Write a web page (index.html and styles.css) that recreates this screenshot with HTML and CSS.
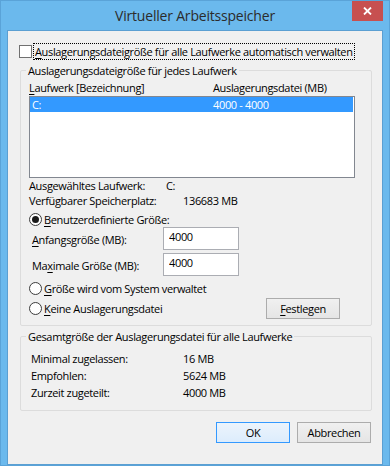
FILE: index.html
```html
<!DOCTYPE html>
<html lang="de">
<head>
    <meta charset="UTF-8">
    <meta name="viewport" content="width=device-width, initial-scale=1.0">
    <title>Virtueller Arbeitsspeicher</title>
    <link rel="stylesheet" href="styles.css">
</head>
<body>
    <div class="window">
        <div class="titlebar">
            <span class="title">Virtueller Arbeitsspeicher</span>
            <button class="close" aria-label="Schließen">
                <svg width="9" height="8" viewBox="0 0 9 8">
                    <path d="M1 0.5 L8 7.5 M8 0.5 L1 7.5" stroke="#fff" stroke-width="1.8" fill="none"/>
                </svg>
            </button>
        </div>
        <div class="client">
            <label class="check-row">
                <span class="checkbox"></span>
                <span class="focus"><u>A</u>uslagerungsdateigröße für alle Laufwerke automatisch verwalten</span>
            </label>

            <fieldset class="group group-drives">
                <legend>Auslagerungsdateigröße für jedes Laufwerk</legend>
                <div class="list-head">
                    <span class="col-drive"><u>L</u>aufwerk [Bezeichnung]</span>
                    <span>Auslagerungsdatei (MB)</span>
                </div>
                <div class="listbox">
                    <div class="list-item selected">
                        <span class="col-drive">C:</span>
                        <span>4000 - 4000</span>
                    </div>
                </div>
                <div class="info-row">
                    <span class="info-label short">Ausgewähltes Laufwerk:</span>
                    <span>C:</span>
                </div>
                <div class="info-row">
                    <span class="info-label">Verfügbarer Speicherplatz:</span>
                    <span>136683 MB</span>
                </div>
                <label class="radio-row first">
                    <span class="radio checked"></span>
                    <span><u>B</u>enutzerdefinierte Größe:</span>
                </label>
                <div class="size-row">
                    <span class="size-label"><u>A</u>nfangsgröße (MB):</span>
                    <input class="textbox" type="text" value="4000">
                </div>
                <div class="size-row second">
                    <span class="size-label">Ma<u>x</u>imale Größe (MB):</span>
                    <input class="textbox" type="text" value="4000">
                </div>
                <label class="radio-row system">
                    <span class="radio"></span>
                    <span><u>G</u>röße wird vom System verwaltet</span>
                </label>
                <div class="last-row">
                    <label class="radio-row">
                        <span class="radio"></span>
                        <span><u>K</u>eine Auslagerungsdatei</span>
                    </label>
                    <button class="button set"><u>F</u>estlegen</button>
                </div>
            </fieldset>

            <fieldset class="group group-total">
                <legend>Gesamtgröße der Auslagerungsdatei für alle Laufwerke</legend>
                <div class="total-grid">
                    <span>Minimal zugelassen:</span><span>16 MB</span>
                    <span>Empfohlen:</span><span>5624 MB</span>
                    <span>Zurzeit zugeteilt:</span><span>4000 MB</span>
                </div>
            </fieldset>

            <div class="actions">
                <button class="button default">OK</button>
                <button class="button">Abbrechen</button>
            </div>
        </div>
    </div>
</body>
</html>
```

FILE: styles.css
```css
body {
    margin: 0;
    background-color: #6bb9ed;
    font-family: "Open Sans", "Noto Sans", sans-serif;
    font-size: 11px;
    letter-spacing: -0.35px;
    color: #000;
}
u {
    text-decoration-thickness: 1px;
    text-underline-offset: 2px;
}
.window {
    width: 390px;
    height: 466px;
    box-sizing: border-box;
    border: 1px solid #5aa3d8;
    background-color: #6bb9ed;
    display: flex;
    flex-direction: column;
}
.titlebar {
    height: 29px;
    display: flex;
    justify-content: center;
    position: relative;
}
.title {
    font-size: 14px;
    letter-spacing: -0.2px;
    line-height: 29px;
    color: #2b2b2b;
}
.close {
    position: absolute;
    top: 0;
    right: 6px;
    width: 31px;
    height: 20px;
    border: none;
    padding: 0;
    background-color: #c75050;
    display: flex;
    justify-content: center;
    align-items: center;
}
.client {
    margin: 0 6px;
    height: 426px;
    border: 1px solid #5b9fd2;
    background-color: #f0f0f0;
    padding-top: 12px;
    box-sizing: content-box;
}
.check-row {
    display: flex;
    align-items: center;
    height: 16px;
    padding-left: 11px;
}
.checkbox {
    width: 13px;
    height: 13px;
    box-sizing: border-box;
    border: 1px solid #707070;
    background-color: #fff;
    margin-right: 2px;
}
.focus {
    outline: 1px dotted #000;
    outline-offset: 0;
    padding: 0 1px;
    line-height: 15px;
    white-space: nowrap;
}
.group {
    margin: 4px 10px 0 12px;
    border: 1px solid #dcdcdc;
    border-radius: 2px;
    padding: 0 16px 6px 8px;
}
.group legend {
    margin-left: -3px;
    padding: 0 2px;
    line-height: 15px;
}
.list-head {
    display: flex;
    line-height: 15px;
    margin-top: 2px;
}
.list-head .col-drive {
    width: 184px;
}
.listbox {
    margin-top: 1px;
    height: 82px;
    box-sizing: border-box;
    border: 1px solid #828790;
    background-color: #fff;
}
.list-item {
    display: flex;
    line-height: 15px;
    padding-left: 2px;
    margin-right: 1px;
}
.list-item .col-drive {
    width: 181px;
}
.selected {
    background-color: #3399ff;
    color: #fff;
}
.info-row {
    display: flex;
    line-height: 15px;
}
.info-row:first-of-type {
    margin-top: 2px;
}
.info-label {
    width: 154px;
}
.info-label.short {
    width: 137px;
}
.radio-row {
    display: flex;
    align-items: center;
    line-height: 15px;
    height: 15px;
}
.radio-row.first {
    margin-top: 4px;
}
.radio-row.system {
    margin-top: 6px;
}
.radio {
    width: 13px;
    height: 13px;
    box-sizing: border-box;
    border: 1px solid #3c3c3c;
    border-radius: 50%;
    background-color: #fff;
    margin-right: 2px;
    display: flex;
    justify-content: center;
    align-items: center;
}
.radio.checked::after {
    content: "";
    width: 7px;
    height: 7px;
    border-radius: 50%;
    background-color: #1a1a1a;
}
.size-row {
    display: flex;
    align-items: center;
    height: 22px;
    padding-left: 3px;
}
.size-row.second {
    margin-top: 4px;
}
.size-label {
    width: 131px;
    padding-top: 2px;
}
.textbox {
    width: 76px;
    height: 23px;
    box-sizing: border-box;
    border: 1px solid #abadb3;
    padding: 0 0 3px 5px;
    font: inherit;
    letter-spacing: inherit;
    color: #000;
    background-color: #fff;
}
.last-row {
    display: flex;
    align-items: center;
    justify-content: space-between;
    margin-top: 2px;
    height: 21px;
}
.button {
    width: 74px;
    height: 21px;
    box-sizing: border-box;
    border: 1px solid #acacac;
    background: linear-gradient(#f0f0f0, #e5e5e5);
    font: inherit;
    letter-spacing: inherit;
    color: #000;
    padding: 0;
}
.button.set {
    margin-right: 15px;
}
.button.default {
    border-color: #3399ff;
    background: linear-gradient(#ecf4fc, #dcecfc);
}
.group-total {
    margin-top: 3px;
    padding: 6px 10px 9px 10px;
}
.group-total legend {
    margin-left: -5px;
}
.total-grid {
    display: grid;
    grid-template-columns: 152px auto;
    grid-auto-rows: 17px;
    align-items: center;
}
.actions {
    display: flex;
    justify-content: flex-end;
    gap: 7px;
    margin: 11px 11px 0 0;
}
```
